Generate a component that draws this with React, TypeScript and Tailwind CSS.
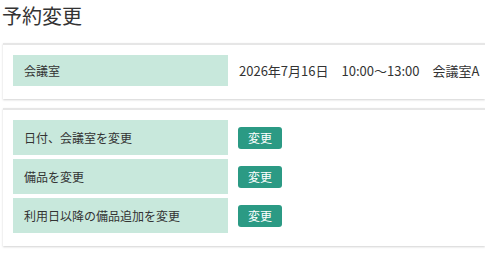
const font = { fontFamily: '"Noto Sans CJK JP", "Noto Sans", sans-serif' }

const changes = ['日付、会議室を変更', '備品を変更', '利用日以降の備品追加を変更']

function Card({ children, className }: { children: React.ReactNode; className: string }) {
  return (
    <section
      className={`ml-[3px] border-t-2 border-[#e6e6e6] bg-white shadow-[0_1px_2px_rgba(0,0,0,0.18)] pl-[10px] ${className}`}
    >
      {children}
    </section>
  )
}

export default function App() {
  return (
    <div className="w-[485px] h-[253px] overflow-hidden bg-white text-[#333]" style={font}>
      <h1 className="pl-[2px] pt-[2px] h-[43px] text-[20px] leading-[28px] font-normal">予約変更</h1>

      <Card className="pt-[10px] pb-[13px]">
        <div className="flex items-center h-[31px]">
          <div className="w-[215px] h-full flex items-center pl-[11px] bg-[#c8e8dc] text-[12px]">会議室</div>
          <div className="pl-[11px] text-[13px] whitespace-pre">2026年7月16日　10:00～13:00　会議室A</div>
        </div>
      </Card>

      <Card className="mt-[9px] pt-[10px] pb-[13px]">
        <div className="flex flex-col gap-[4px]">
          {changes.map((label) => (
            <div key={label} className="flex items-center h-[35px]">
              <div className="w-[215px] h-full flex items-center pl-[11px] bg-[#c8e8dc] text-[12px]">
                {label}
              </div>
              <button className="ml-[10px] h-[22px] w-[44px] rounded-[3px] bg-[#2b9a84] text-white text-[12px] leading-[22px]">
                変更
              </button>
            </div>
          ))}
        </div>
      </Card>
    </div>
  )
}
